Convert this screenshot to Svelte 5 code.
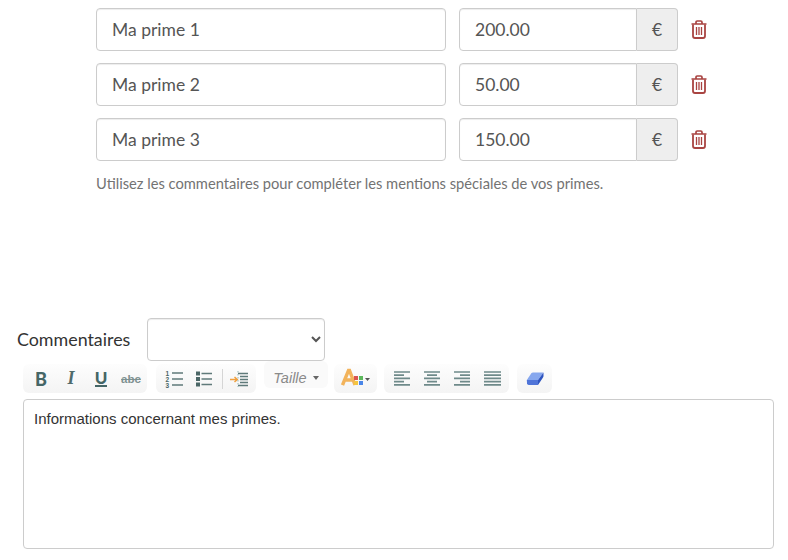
<script>
  const primes = [
    { name: 'Ma prime 1', value: '200.00' },
    { name: 'Ma prime 2', value: '50.00' },
    { name: 'Ma prime 3', value: '150.00' }
  ];
  const aligns = [
    'M0 1h16M0 4.200h10M0 7.400h16M0 10.600h10M0 13.800h16',
    'M0 1h16M3 4.200h10M0 7.400h16M3 10.600h10M0 13.800h16',
    'M0 1h16M6 4.200h10M0 7.400h16M6 10.600h10M0 13.800h16',
    'M0 1h17M0 4.200h17M0 7.400h17M0 10.600h17M0 13.800h17'
  ];
</script>

<div class="page">
  <section class="primes">
    {#each primes as p}
      <div class="row">
        <input class="ctl name" type="text" value={p.name} />
        <div class="group">
          <input class="ctl amount" type="text" value={p.value} />
          <span class="addon">€</span>
        </div>
        <svg class="trash" viewBox="0 0 16 19" width="16" height="19" fill="none" stroke="#a94442">
          <path stroke-width="1.7" d="M0.500 4h15M5 4V2.200Q5 1 6.200 1h3.600Q11 1 11 2.200V4" />
          <path stroke-width="1.800" d="M2 4.500V16q0 2 2 2h8q2 0 2-2V4.500" />
          <path stroke-width="1.300" d="M5.500 7v8M8 7v8M10.500 7v8" />
        </svg>
      </div>
    {/each}
    <p class="help">Utilisez les commentaires pour compléter les mentions spéciales de vos primes.</p>
  </section>

  <section class="comments">
    <div class="label-row">
      <span class="label">Commentaires</span>
      <select class="ctl select"><option></option></select>
    </div>

    <div class="toolbar">
      <div class="tg g1">
        <span class="btn"><b class="b">B</b></span>
        <span class="btn"><i class="i">I</i></span>
        <span class="btn"><span class="u">U</span></span>
        <span class="btn"><s class="abc">abc</s></span>
      </div>
      <div class="tg g2">
        <span class="btn">
          <svg viewBox="0 0 18 18" width="18" height="18" fill="none" stroke="#5f7a7a" stroke-width="1.500">
            <path d="M7 3h11M7 9h11M7 15h11" />
            <g class="nums" fill="#4b6666" stroke="none">
              <text x="0.500" y="6">1</text>
              <text x="0.500" y="12">2</text>
              <text x="0.500" y="18">3</text>
            </g>
          </svg>
        </span>
        <span class="btn">
          <svg viewBox="0 0 16 18" width="16" height="18" fill="none" stroke="#5f7a7a" stroke-width="1.500">
            <path d="M5.500 3.500H16M5.500 9H16M5.500 14.500H16" />
            <path fill="#4b6666" stroke="none" d="M0 1.500h4v4H0zM0 7h4v4H0zM0 12.500h4v4H0z" />
          </svg>
        </span>
        <span class="sep"></span>
        <span class="btn wide">
          <svg viewBox="0 0 20 18" width="20" height="18" fill="none" stroke="#5f7a7a" stroke-width="1.600">
            <path d="M9 3.500h10M11 6.500h8M11 9.500h8M11 12.500h8M9 15.500h10" />
            <path stroke="#f0a040" stroke-width="1.500" d="M1 9.500h7M5.500 7l2.800 2.500L5.500 12" />
            <path stroke="#9bb" stroke-width="1" stroke-dasharray="1.500 1.500" d="M9 1v16" />
          </svg>
        </span>
      </div>
      <div class="tg taille"><i>Taille</i><span class="caret"></span></div>
      <div class="tg color">
        <svg viewBox="0 0 30 22" width="30" height="22">
          <path fill="none" stroke="#f2b35b" stroke-width="3.400" d="M1.500 17 7.500 2.500h1L14 17M4 12h8" />
          <rect x="13" y="8" width="4" height="4" fill="#d9534f" />
          <rect x="18" y="8" width="4" height="4" fill="#5cb85c" />
          <rect x="13" y="13" width="4" height="4" fill="#f4c542" />
          <rect x="18" y="13" width="4" height="4" fill="#4a86e8" />
          <path fill="#555" d="M24 10h5l-2.500 3z" />
        </svg>
      </div>
      <div class="tg g5">
        {#each aligns as d}
          <span class="btn">
            <svg viewBox="0 0 17 15" width="17" height="15" fill="none" stroke="#6f8a8a" stroke-width="1.700"><path {d} /></svg>
          </span>
        {/each}
      </div>
      <div class="tg g6">
        <svg viewBox="0 0 18 14" width="18" height="14">
          <path fill="#86a7ee" d="M5.500 1Q6 0.500 7 0.500h10.500L12 8H0.800z" />
          <path fill="#4f74d8" d="M0.800 8H12v5H3Q1.500 13 1 11.500z" />
          <path fill="#2f55c0" d="M12 8 17.500 0.500V4q0 0.800-0.500 1.500L12 13z" />
        </svg>
      </div>
    </div>

    <div class="editor">Informations concernant mes primes.</div>
  </section>
</div>

<style>
  :global(body) {
    margin: 0;
    background: #fff;
  }
  .page {
    width: 788px;
    height: 560px;
    overflow: hidden;
    font-family: Lato, sans-serif;
    color: #333;
    padding-top: 8px;
    box-sizing: border-box;
  }
  .primes {
    padding-left: 96px;
    height: 310px;
    display: flex;
    flex-direction: column;
    gap: 12px;
  }
  .row {
    display: flex;
    align-items: center;
    height: 43px;
  }
  .ctl {
    box-sizing: border-box;
    height: 43px;
    border: 1px solid #ccc;
    border-radius: 4px;
    background: #fff;
    font: 17.5px Lato, sans-serif;
    color: #555;
    padding: 0 15px;
    box-shadow: inset 0 1px 1px rgba(0, 0, 0, 0.075);
    margin: 0;
  }
  .name {
    width: 350px;
    margin-right: 13px;
  }
  .group {
    display: flex;
    width: 219px;
    margin-right: 13px;
  }
  .amount {
    width: 178px;
    border-radius: 4px 0 0 4px;
  }
  .addon {
    box-sizing: border-box;
    width: 41px;
    height: 43px;
    padding-bottom: 1px;
    display: flex;
    align-items: center;
    justify-content: center;
    background: #eee;
    border: 1px solid #ccc;
    border-left: 0;
    border-radius: 0 4px 4px 0;
    font-size: 17.5px;
    color: #555;
  }
  .help {
    margin: 0;
    font-size: 14.7px;
    line-height: 20px;
    color: #737373;
  }
  .comments {
    padding-left: 17px;
  }
  .label-row {
    display: flex;
    align-items: center;
    gap: 17px;
    height: 43px;
  }
  .label {
    font-size: 17.85px;
    color: #333;
    padding-bottom: 2px;
  }
  .select {
    width: 178px;
    padding: 0 4px;
  }
  .toolbar {
    display: flex;
    margin: 3px 0 0 6px;
    height: 29px;
  }
  .tg {
    box-sizing: border-box;
    display: flex;
    align-items: center;
    height: 29px;
    border-radius: 6px;
    background: linear-gradient(#fdfdfd, #f4f4f4);
    color: #4f6b6b;
  }
  .btn {
    display: flex;
    align-items: center;
    justify-content: center;
    width: 30px;
    height: 29px;
    flex: none;
  }
  .btn.wide { width: 32px; }
  .g1 {
    width: 124px;
    padding-left: 3px;
  }
  .g2 {
    width: 100px;
    margin-left: 9px;
    padding-left: 2.5px;
  }
  .g5 {
    width: 125px;
    margin-left: 7px;
    padding-left: 3px;
  }
  .g6 {
    width: 35px;
    margin-left: 8px;
    justify-content: center;
  }
  .b {
    font: 900 18px Lato, sans-serif;
    color: #456666;
  }
  .i {
    font: italic 700 18px "Liberation Serif", serif;
    color: #4f6b6b;
  }
  .u {
    font: 900 17px/15px Lato, sans-serif;
    color: #456666;
    border-bottom: 2px solid #456666;
  }
  .abc {
    font: 700 11.5px "Liberation Sans", sans-serif;
    color: #7f9292;
  }
  .nums {
    font: 700 6.5px "Liberation Sans", sans-serif;
  }
  .sep {
    width: 1px;
    height: 20px;
    margin-left: 3px;
    background: #d5d5d5;
  }
  .taille {
    box-sizing: border-box;
    width: 64px;
    height: 27px;
    margin: -3px 0 0 8px;
    padding-top: 6px;
    justify-content: center;
    gap: 6px;
    font: italic 14.5px "Liberation Sans", sans-serif;
    color: #8a8a8a;
    background: #fafafa;
  }
  .caret {
    border-top: 4px solid #666;
    border-left: 3px solid transparent;
    border-right: 3px solid transparent;
  }
  .color {
    width: 43px;
    margin-left: 6px;
    justify-content: center;
  }
  .editor {
    box-sizing: border-box;
    width: 751px;
    height: 150px;
    margin: 6px 0 0 6px;
    padding: 9px 10px;
    border: 1px solid #ccc;
    border-radius: 4px;
    font: 15px/20px "Liberation Sans", sans-serif;
    color: #333;
  }
  .trash {
    flex: none;
  }
</style>
